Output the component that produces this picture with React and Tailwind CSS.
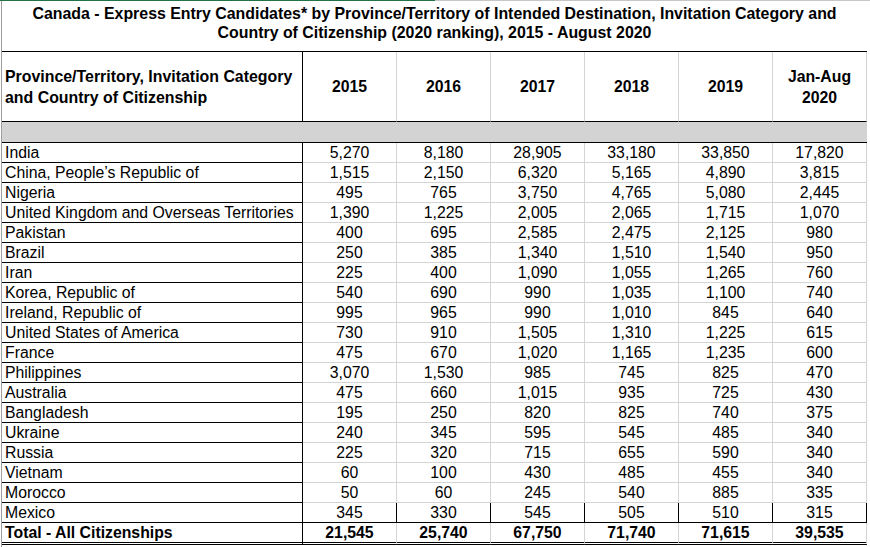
import React from 'react';

const rows = [
  ['India', '5,270', '8,180', '28,905', '33,180', '33,850', '17,820'],
  ['China, People\u2019s Republic of', '1,515', '2,150', '6,320', '5,165', '4,890', '3,815'],
  ['Nigeria', '495', '765', '3,750', '4,765', '5,080', '2,445'],
  ['United Kingdom and Overseas Territories', '1,390', '1,225', '2,005', '2,065', '1,715', '1,070'],
  ['Pakistan', '400', '695', '2,585', '2,475', '2,125', '980'],
  ['Brazil', '250', '385', '1,340', '1,510', '1,540', '950'],
  ['Iran', '225', '400', '1,090', '1,055', '1,265', '760'],
  ['Korea, Republic of', '540', '690', '990', '1,035', '1,100', '740'],
  ['Ireland, Republic of', '995', '965', '990', '1,010', '845', '640'],
  ['United States of America', '730', '910', '1,505', '1,310', '1,225', '615'],
  ['France', '475', '670', '1,020', '1,165', '1,235', '600'],
  ['Philippines', '3,070', '1,530', '985', '745', '825', '470'],
  ['Australia', '475', '660', '1,015', '935', '725', '430'],
  ['Bangladesh', '195', '250', '820', '825', '740', '375'],
  ['Ukraine', '240', '345', '595', '545', '485', '340'],
  ['Russia', '225', '320', '715', '655', '590', '340'],
  ['Vietnam', '60', '100', '430', '485', '455', '340'],
  ['Morocco', '50', '60', '245', '540', '885', '335'],
  ['Mexico', '345', '330', '545', '505', '510', '315'],
];

const total = ['Total - All Citizenships', '21,545', '25,740', '67,750', '71,740', '71,615', '39,535'];

function DataRow({ cells, last }) {
  const bottom = last ? 'border-b border-black' : 'border-b border-[#d4d4d4]';
  return (
    <>
      <div className={`h-[20px] pl-[3px] leading-[20px] whitespace-nowrap border-r border-black ${bottom}`}>
        {cells[0]}
      </div>
      {cells.slice(1).map((v, i) => (
        <div key={i} className={`h-[20px] leading-[20px] text-center border-r border-[#d4d4d4] ${bottom}`}>
          {v}
        </div>
      ))}
    </>
  );
}

export default function App() {
  return (
    <div className="w-[870px] h-[547px] bg-white text-black font-['Liberation_Sans',Arial,sans-serif] overflow-hidden">
      <div className="h-px flex">
        <div className="w-[435px] bg-[#217346]" />
        <div className="flex-1 bg-[#c6c6c6]" />
      </div>
      <div className="pl-px">
        <div className="border-l border-[#9e9e9e] w-[866px] h-[546px]">
          <div className="h-[51px] pt-[3px] border-b border-black text-center font-bold text-[15.9px] leading-[19px] whitespace-nowrap">
            <div>Canada - Express Entry Candidates* by Province/Territory of Intended Destination, Invitation Category and</div>
            <div>Country of Citizenship (2020 ranking), 2015 - August 2020</div>
          </div>

          <div className="grid grid-cols-[301px_repeat(6,94px)] text-[15.8px]">
            <div className="h-[70px] pl-[3px] flex items-center border-r border-b border-black font-bold leading-[21px] text-[15.9px] whitespace-nowrap">
              <div>
                Province/Territory, Invitation Category
                <br />
                and Country of Citizenship
              </div>
            </div>
            {['2015', '2016', '2017', '2018', '2019'].map((y) => (
              <div key={y} className="h-[70px] flex items-center justify-center border-r border-[#d4d4d4] border-b border-b-black font-bold">
                {y}
              </div>
            ))}
            <div className="h-[70px] flex items-center justify-center text-center border-r border-[#d4d4d4] border-b border-b-black font-bold leading-[21px]">
              <div>
                Jan-Aug
                <br />
                2020
              </div>
            </div>

            <div className="col-span-7 h-[21px] bg-[#d3d3d3] border-b border-black" />

            {rows.map((r, i) => (
              <DataRow key={r[0]} cells={r} last={i === rows.length - 1} />
            ))}

            <div className="h-[22px] pl-[3px] leading-[20px] font-bold whitespace-nowrap border-r border-r-black border-b-[3px] border-double border-b-black">
              {total[0]}
            </div>
            {total.slice(1).map((v, i) => (
              <div key={i} className="h-[22px] leading-[20px] font-bold text-center border-r border-r-[#d4d4d4] border-b-[3px] border-double border-b-black">
                {v}
              </div>
            ))}
          </div>
        </div>
      </div>
    </div>
  );
}
